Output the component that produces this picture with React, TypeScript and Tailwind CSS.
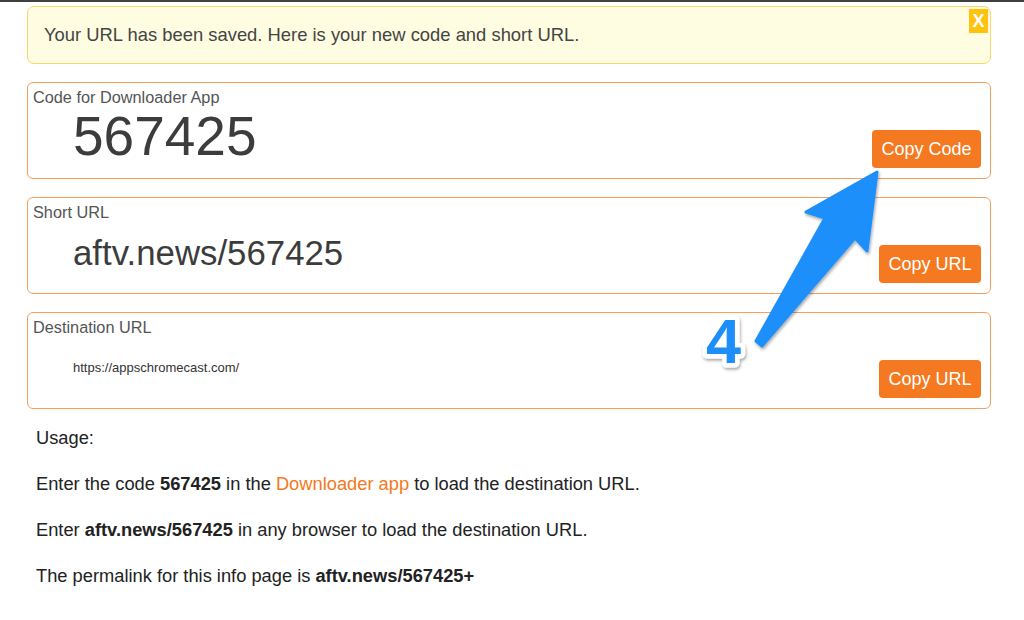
import { ReactNode } from "react";

type FieldProps = {
  label: string;
  button: string;
  children: ReactNode;
};

// 枠付きの項目（ラベル・値・コピーボタン）
const Field = ({ label, button, children }: FieldProps) => {
  return (
    <div className="flex h-[97px] rounded-[6px] border border-[#f6a05c] bg-white">
      <div className="flex-1 pl-[5px] pt-[5px]">
        <div className="text-[16.3px] leading-[18px] text-[#555]">{label}</div>
        {children}
      </div>
      <button className="self-end mb-[10px] mr-[9px] h-[38px] px-[9.5px] rounded-[4px] bg-[#f47920] text-[18px] leading-[20px] text-white">
        {button}
      </button>
    </div>
  );
};

const App = () => {
  const code = "567425";
  const shortUrl = `aftv.news/${code}`;

  return (
    <div className="relative h-[620px] w-[1024px] overflow-hidden bg-white font-['Liberation_Sans',Arial,sans-serif]">
      <div className="h-[2px] bg-[#3f3f3f]" />

      <div className="ml-[27px] w-[964px]">
        {/* 保存完了メッセージ */}
        <div className="mt-[4px] flex h-[58px] rounded-[7px] border border-[#fcd66a] bg-[#fffde1]">
          <div className="flex-1 self-center pl-[16px] text-[18.4px] leading-[24px] text-[#444]">
            Your URL has been saved. Here is your new code and short URL.
          </div>
          <button className="mr-[2px] mt-[2px] h-[24px] w-[19px] self-start bg-[#ffc20e] text-[18px] font-bold leading-[24px] text-white">
            X
          </button>
        </div>

        <div className="mt-[18px] flex flex-col gap-[18px]">
          <Field label="Code for Downloader App" button="Copy Code">
            <div className="ml-[40px] mt-[1px] text-[55px] leading-[58px] text-[#3c3c3c]">
              {code}
            </div>
          </Field>
          <Field label="Short URL" button="Copy URL">
            <div className="ml-[40px] mt-[12px] text-[34.8px] leading-[40px] text-[#3c3c3c]">
              {shortUrl}
            </div>
          </Field>
          <Field label="Destination URL" button="Copy URL">
            <div className="ml-[40px] mt-[24px] text-[13px] leading-[16px] text-[#333]">
              https://appschromecast.com/
            </div>
          </Field>
        </div>

        {/* 使い方 */}
        <div className="mt-[18px] flex flex-col gap-[25px] pl-[9px] text-[18.3px] leading-[21px] text-[#222]">
          <p>Usage:</p>
          <p>
            Enter the code <b>{code}</b> in the{" "}
            <span className="text-[#f47920]">Downloader app</span> to load the
            destination URL.
          </p>
          <p>
            Enter <b>{shortUrl}</b> in any browser to load the destination URL.
          </p>
          <p>
            The permalink for this info page is <b>{shortUrl}+</b>
          </p>
        </div>
      </div>

      {/* 注釈の矢印と番号 */}
      <svg
        className="pointer-events-none absolute left-0 top-0"
        width="1024"
        height="620"
        viewBox="0 0 1024 620"
      >
        <defs>
          <filter id="shadow" x="-20%" y="-20%" width="140%" height="140%">
            <feDropShadow dx="1" dy="2" stdDeviation="1.5" floodColor="#000" floodOpacity="0.35" />
          </filter>
        </defs>
        <path
          d="M756 341 L825 218 L806 212 L877 172 L867 251 L855 238 L762 346 Z"
          fill="#1e8ffb"
          stroke="#1e8ffb"
          strokeWidth="3"
          strokeLinejoin="round"
          filter="url(#shadow)"
        />
        <text
          x="706"
          y="363"
          fontFamily="'Liberation Sans', Arial, sans-serif"
          fontSize="63"
          fontWeight="bold"
          fill="#1e8ffb"
          stroke="#fff"
          strokeWidth="9"
          strokeLinejoin="round"
          paintOrder="stroke"
          filter="url(#shadow)"
        >
          4
        </text>
      </svg>
    </div>
  );
};

export default App;
